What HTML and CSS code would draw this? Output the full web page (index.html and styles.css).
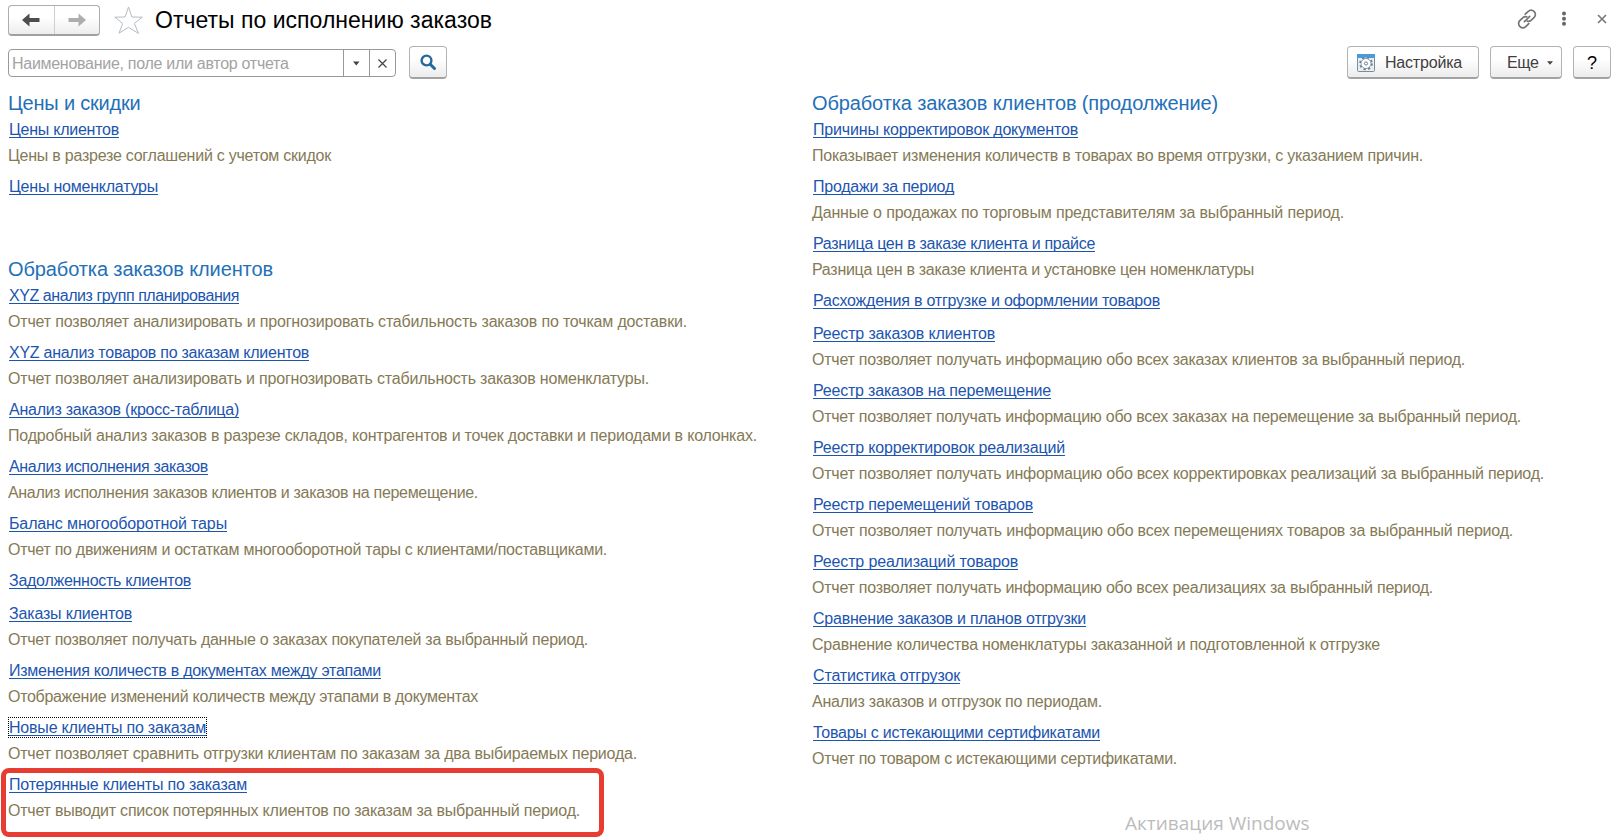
FILE: index.html
```html
<!DOCTYPE html>
<html lang="ru">
<head>
<meta charset="utf-8">
<title>Отчеты по исполнению заказов</title>
<link rel="stylesheet" href="styles.css">
</head>
<body>
<header class="titlebar">
  <div class="nav">
    <button class="nav-btn" aria-label="Назад"><svg width="18" height="14" viewBox="0 0 18 14"><path d="M0 7 7.5 .5V5H17.5V9H7.5V13.5Z" fill="#4d4d4d"/></svg></button>
    <button class="nav-btn" aria-label="Вперед"><svg width="18" height="14" viewBox="0 0 18 14"><path d="M18 7 10.5 .5V5H.5V9H10.5V13.5Z" fill="#adadad"/></svg></button>
  </div>
  <svg class="star" width="30" height="29" viewBox="0 0 30 29"><path d="M14.500 1 17.900 11 28.300 11.200 20.300 17.400 24.500 27.400 14.500 21.300 5 27.200 8.700 17.400 .8 11.200 11.100 11Z" fill="#fff" stroke="#b4bcc4" stroke-width="1"/></svg>
  <h1 class="title"><span data-w="337">Отчеты по исполнению заказов</span></h1>
  <div class="window-tools">
    <svg width="20" height="20" viewBox="0 0 20 20" fill="none" stroke="#757575" stroke-width="1.7" stroke-linecap="round"><path d="M8.2 5.2 11 2.6C12.800 .9 15.300 .8 17 2.400S18.900 6.600 17.200 8.400L14 11.400C13 12.300 11.600 12.600 10.300 12.100"/><path d="M11.800 14.700 9 17.400C7.200 19.100 4.700 19.200 3 17.600S1.100 13.400 2.800 11.600L6 8.600C7 7.700 8.400 7.400 9.700 7.900"/><path d="M7.400 12.700 12.700 7.400"/></svg>
    <svg class="dots" width="6" height="16" viewBox="0 0 6 16" fill="#666"><circle cx="3" cy="2.600" r="2"/><circle cx="3" cy="7.700" r="2"/><circle cx="3" cy="12.800" r="2"/></svg>
    <svg width="10" height="10" viewBox="0 0 10 10" stroke="#777" stroke-width="1.600"><path d="M1 1 9 9M9 1 1 9"/></svg>
  </div>
</header>
<div class="toolbar">
  <div class="search">
    <div class="search-text"><span data-w="276.500">Наименование, поле или автор отчета</span></div>
    <div class="search-cell"><svg width="8" height="5" viewBox="0 0 8 5"><path d="M0 .5H6.500L3.250 4.500Z" fill="#444"/></svg></div>
    <div class="search-cell"><svg width="9" height="9" viewBox="0 0 9 9" stroke="#444" stroke-width="1.200"><path d="M.5 .5 8.500 8.500M8.500 .5 .5 8.500"/></svg></div>
  </div>
  <button class="btn find" aria-label="Найти"><svg width="17" height="17" viewBox="0 0 17 17" fill="none" stroke="#22699f"><circle cx="6.500" cy="6.500" r="4.900" stroke-width="2.400"/><path d="M10.200 10.200 14.500 14.500" stroke-width="3" stroke-linecap="round"/></svg></button>
  <button class="btn setup"><svg width="18" height="18" viewBox="0 0 18 18"><rect x=".5" y=".5" width="17" height="17" rx="1" fill="#e9eef2" stroke="#7b8d9c"/><path d="M0 0H18V4H0Z" fill="#4a9bdc"/><circle cx="9" cy="9.500" r="5.900" fill="#fff" stroke="#6f8191" stroke-width="1.800" stroke-dasharray="2.317 2.317"/><circle cx="9" cy="9.500" r="5" fill="#fff" stroke="#6f8191" stroke-width=".8"/><circle cx="9" cy="9.500" r="1.600" fill="#fff" stroke="#6f8191"/></svg><span data-w="77">Настройка</span></button>
  <button class="btn more"><span data-w="31.500">Еще</span><svg width="6" height="4" viewBox="0 0 6 4"><path d="M0 .3H6L3 3.700Z" fill="#444"/></svg></button>
  <button class="btn help">?</button>
</div>
<main class="columns">
  <div class="column">
    <section class="group first">
      <h2><span data-w="132.500">Цены и скидки</span></h2>
      <div class="item"><a data-w="110">Цены клиентов</a><p><span data-w="323">Цены в разрезе соглашений с учетом скидок</span></p></div>
      <div class="item"><a data-w="149">Цены номенклатуры</a></div>
    </section>
    <section class="group">
      <h2><span data-w="265">Обработка заказов клиентов</span></h2>
      <div class="item"><a data-w="230">XYZ анализ групп планирования</a><p><span data-w="679">Отчет позволяет анализировать и прогнозировать стабильность заказов по точкам доставки.</span></p></div>
      <div class="item"><a data-w="300">XYZ анализ товаров по заказам клиентов</a><p><span data-w="641">Отчет позволяет анализировать и прогнозировать стабильность заказов номенклатуры.</span></p></div>
      <div class="item"><a data-w="230">Анализ заказов (кросс-таблица)</a><p><span data-w="749">Подробный анализ заказов в разрезе складов, контрагентов и точек доставки и периодами в колонках.</span></p></div>
      <div class="item"><a data-w="199">Анализ исполнения заказов</a><p><span data-w="470">Анализ исполнения заказов клиентов и заказов на перемещение.</span></p></div>
      <div class="item"><a data-w="218">Баланс многооборотной тары</a><p><span data-w="599">Отчет по движениям и остаткам многооборотной тары с клиентами/поставщиками.</span></p></div>
      <div class="item"><a data-w="182">Задолженность клиентов</a></div>
      <div class="item"><a data-w="123">Заказы клиентов</a><p><span data-w="580">Отчет позволяет получать данные о заказах покупателей за выбранный период.</span></p></div>
      <div class="item"><a data-w="372">Изменения количеств в документах между этапами</a><p><span data-w="470">Отображение изменений количеств между этапами в документах</span></p></div>
      <div class="item"><a class="focused" data-w="197">Новые клиенты по заказам</a><p><span data-w="629">Отчет позволяет сравнить отгрузки клиентам по заказам за два выбираемых периода.</span></p></div>
      <div class="item marked"><a data-w="238">Потерянные клиенты по заказам</a><p><span data-w="572">Отчет выводит список потерянных клиентов по заказам за выбранный период.</span></p></div>
    </section>
  </div>
  <div class="column">
    <section class="group">
      <h2><span data-w="406">Обработка заказов клиентов (продолжение)</span></h2>
      <div class="item"><a data-w="265">Причины корректировок документов</a><p><span data-w="611">Показывает изменения количеств в товарах во время отгрузки, с указанием причин.</span></p></div>
      <div class="item"><a data-w="141">Продажи за период</a><p><span data-w="532">Данные о продажах по торговым представителям за выбранный период.</span></p></div>
      <div class="item"><a data-w="282">Разница цен в заказе клиента и прайсе</a><p><span data-w="442">Разница цен в заказе клиента и установке цен номенклатуры</span></p></div>
      <div class="item"><a data-w="347">Расхождения в отгрузке и оформлении товаров</a></div>
      <div class="item"><a data-w="182">Реестр заказов клиентов</a><p><span data-w="653">Отчет позволяет получать информацию обо всех заказах клиентов за выбранный период.</span></p></div>
      <div class="item"><a data-w="238">Реестр заказов на перемещение</a><p><span data-w="709">Отчет позволяет получать информацию обо всех заказах на перемещение за выбранный период.</span></p></div>
      <div class="item"><a data-w="252">Реестр корректировок реализаций</a><p><span data-w="732">Отчет позволяет получать информацию обо всех корректировках реализаций за выбранный период.</span></p></div>
      <div class="item"><a data-w="220">Реестр перемещений товаров</a><p><span data-w="701">Отчет позволяет получать информацию обо всех перемещениях товаров за выбранный период.</span></p></div>
      <div class="item"><a data-w="205">Реестр реализаций товаров</a><p><span data-w="621">Отчет позволяет получать информацию обо всех реализациях за выбранный период.</span></p></div>
      <div class="item"><a data-w="273">Сравнение заказов и планов отгрузки</a><p><span data-w="568">Сравнение количества номенклатуры заказанной и подготовленной к отгрузке</span></p></div>
      <div class="item"><a data-w="147">Статистика отгрузок</a><p><span data-w="290">Анализ заказов и отгрузок по периодам.</span></p></div>
      <div class="item"><a data-w="287">Товары с истекающими сертификатами</a><p><span data-w="365">Отчет по товаром с истекающими сертификатами.</span></p></div>
    </section>
    <div class="watermark">Активация Windows</div>
  </div>
</main>
<script src="fit.js"></script>
</body>
</html>
```
FILE: styles.css
```css
*, *::after { box-sizing: border-box; }
body {
  margin: 0;
  height: 840px;
  overflow: hidden;
  background: #fff;
  color: #404040;
  font: 16px/24px "Liberation Sans", Arial, sans-serif;
}
h1, h2, p { margin: 0; font-weight: normal; white-space: nowrap; }
svg { display: block; flex: none; }
button { font: inherit; color: inherit; padding: 0; }

.titlebar { display: flex; height: 40px; padding: 5px 8px 0; align-items: flex-start; }
.nav {
  display: flex;
  width: 92px;
  height: 31px;
  border: 1px solid #adadad;
  border-bottom: 2px solid #a0a0a0;
  border-radius: 4px;
  background: linear-gradient(#fff 40%, #ededed);
}
.nav-btn { flex: 1; display: flex; align-items: center; justify-content: center; border: 0; background: none; }
.nav-btn + .nav-btn { border-left: 1px solid #cfcfcf; }
.star { margin: 1px 0 0 14px; }
.title { margin-left: 11px; font-size: 23px; line-height: 30px; color: #000; }
.window-tools { display: flex; align-items: center; margin: 4px -4px 0 auto; height: 20px; }
.dots { margin: 0 30px 0 24px; }
.window-tools svg:last-child { margin-right: 3px; }

.toolbar { display: flex; height: 46px; padding: 6px 3px 0 8px; align-items: flex-start; }
.search {
  display: flex;
  width: 388px;
  height: 28px;
  margin-top: 3px;
  border: 1px solid #999;
  border-radius: 4px;
}
.search-text { flex: 1; padding-left: 3px; line-height: 28px; color: #a3a3a3; white-space: nowrap; }
.search-cell { width: 26px; border-left: 1px solid #999; display: flex; align-items: center; justify-content: center; }
.btn {
  display: flex;
  align-items: center;
  height: 33px;
  border: 1px solid #b3b3b3;
  border-bottom: 2px solid #a3a3a3;
  border-radius: 4px;
  background: linear-gradient(#fff 40%, #ececec);
}
.find { width: 38px; margin-left: 13px; padding-top: 1px; justify-content: center; }
.setup { width: 132px; margin-left: auto; padding: 2px 0 0 9px; gap: 10px; }
.more { width: 72px; margin-left: 11px; padding: 2px 0 0 16px; gap: 8px; }
.help { width: 38px; margin-left: 11px; padding-top: 2px; justify-content: center; font-size: 18px; color: #000; }

.columns { display: flex; padding: 4px 0 0 8px; }
.column { flex: none; width: 804px; }
.column + .column { width: 800px; }
.group.first { height: 166px; }
.group h2 { height: 28px; padding-top: 1px; font-size: 20px; line-height: 24px; color: #2470b8; }
.item { position: relative; height: 57px; }
.item:not(:has(p)) { height: 33px; }
.item a {
  display: block;
  width: max-content;
  margin-left: 1px;
  height: 20px;
  line-height: 24px;
  border-bottom: 1px solid #1c55b0;
  color: #1c55b0;
  white-space: nowrap;
}
.item p { margin-top: 6px; color: #857a56; }
.focused::after {
  content: "";
  position: absolute;
  left: 0;
  top: 1px;
  width: 199px;
  height: 21px;
  border: 1px dotted #000;
}
.marked::after {
  content: "";
  position: absolute;
  left: -7px;
  top: -5px;
  width: 603px;
  height: 69px;
  border: 5px solid #e73c32;
  border-radius: 8px;
}
.watermark { margin: 32px 0 0 313px; font: 19px/26px "Open Sans", sans-serif; color: #bcbcbc; }
```
FILE: fit.js
```js
// Tracks each label so that its line takes the width given in data-w.
document.querySelectorAll('[data-w]').forEach(function (el) {
  var gap = parseFloat(el.dataset.w) - el.getBoundingClientRect().width;
  el.style.letterSpacing = gap / el.textContent.length + 'px';
});
```
